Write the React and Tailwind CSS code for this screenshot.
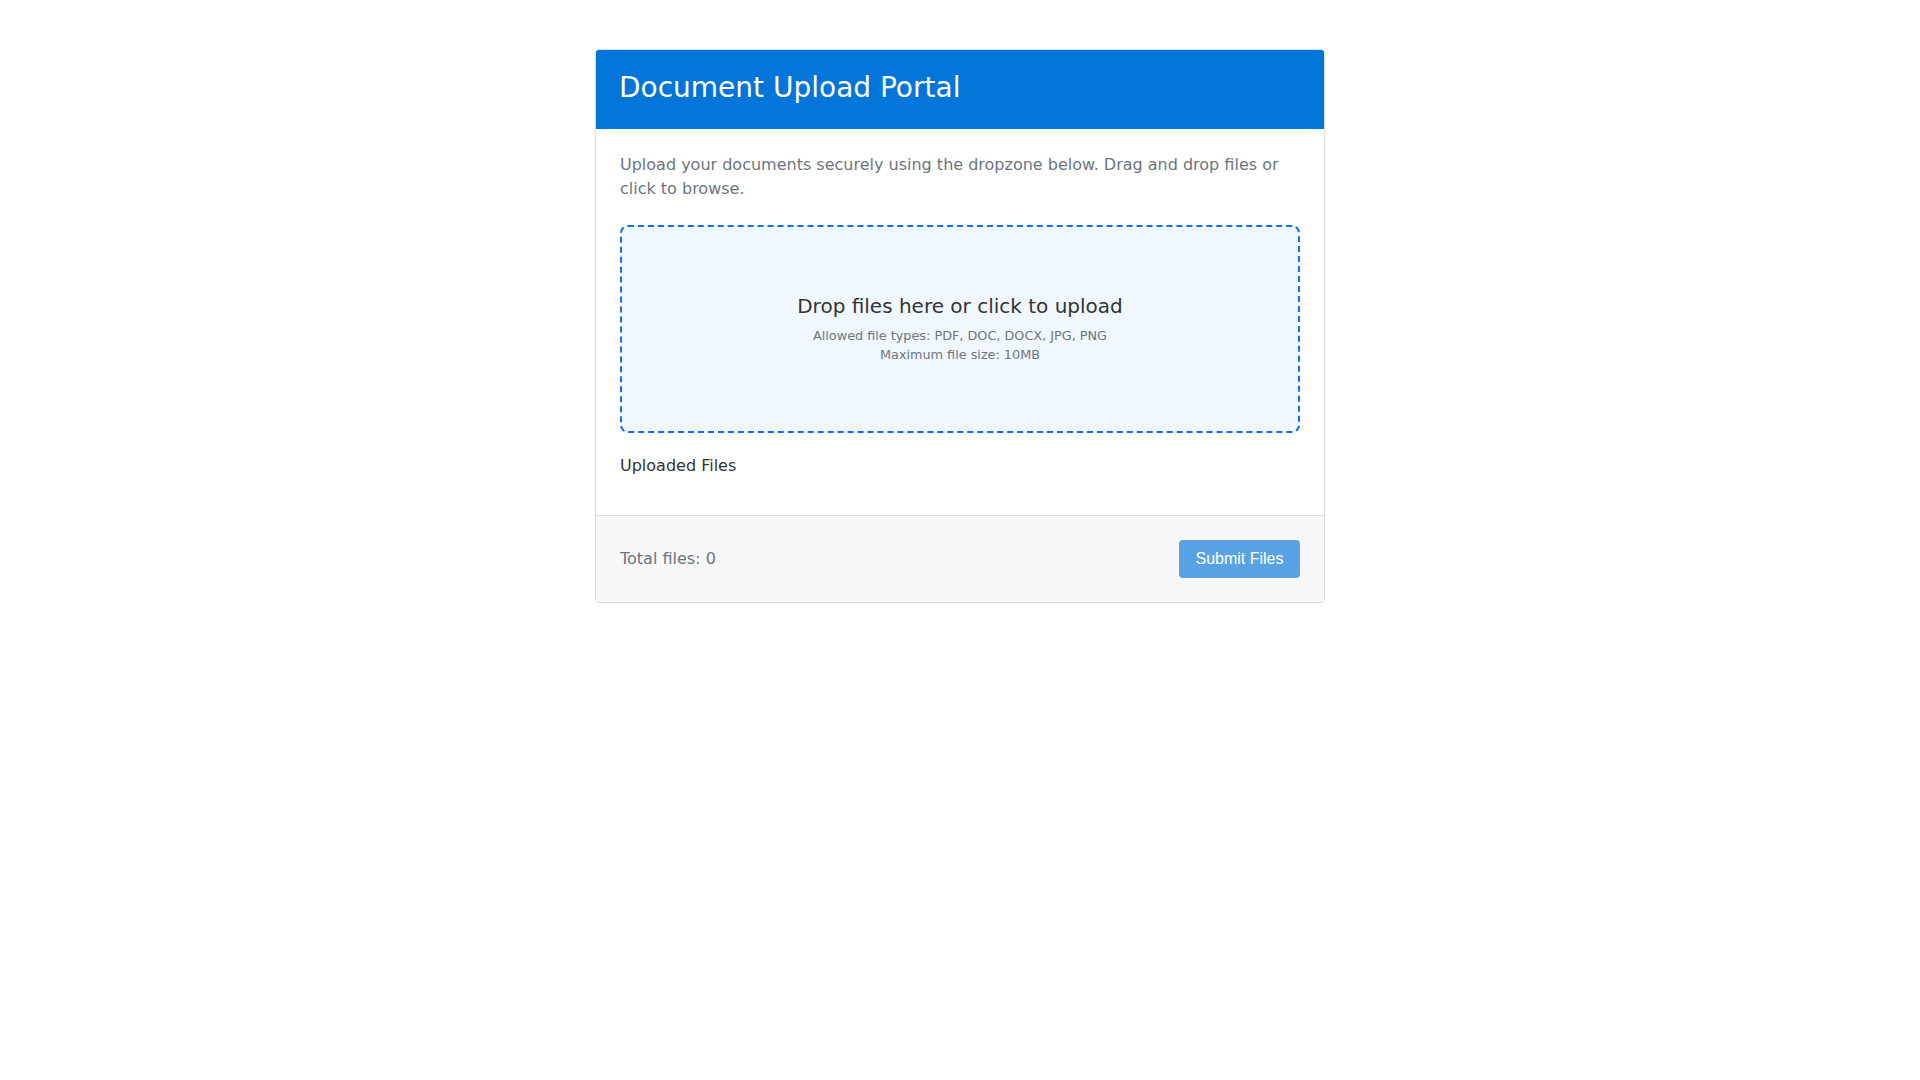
import React from "react";

export default function App() {
  return (
    <div className="min-h-screen bg-white font-['DejaVu_Sans',sans-serif]">
      <div className="pt-[49px] flex justify-center">
        <div className="w-[730px] border border-[#dcdcdc] rounded-[4px] overflow-hidden">
          <div className="bg-[#0275d8] px-6 pt-[23px] pb-[25px] -mx-px -mt-px">
            <h1 className="text-white text-[28px] leading-8 font-normal">Document Upload Portal</h1>
          </div>
          <div className="px-6 pt-6 pb-6">
            <p className="text-[#6c757d] text-base leading-6">
              Upload your documents securely using the dropzone below. Drag and drop files or click to browse.
            </p>
            <div className="mt-6 h-[208px] border-2 border-dashed border-[#0d6efd] rounded-lg bg-[#f0f7ff] flex flex-col items-center justify-center">
              <div className="text-[#333333] text-[20px] leading-6 mb-2">Drop files here or click to upload</div>
              <div className="text-[#6c757d] text-[12.8px] leading-[19px] text-center">
                <div>Allowed file types: PDF, DOC, DOCX, JPG, PNG</div>
                <div>Maximum file size: 10MB</div>
              </div>
            </div>
            <h3 className="mt-[23px] mb-4 text-[#333333] text-base leading-[19px] font-normal">Uploaded Files</h3>
          </div>
          <div className="border-t border-[#dcdcdc] bg-[#f7f7f8] p-6 flex items-center justify-between">
            <span className="text-[#6c757d] text-base leading-6">Total files: 0</span>
            <button className="h-[38px] w-[121px] rounded-[4px] bg-[#59a3e4] text-white text-base font-['Liberation_Sans',Arial,sans-serif]">
              Submit Files
            </button>
          </div>
        </div>
      </div>
    </div>
  );
}
